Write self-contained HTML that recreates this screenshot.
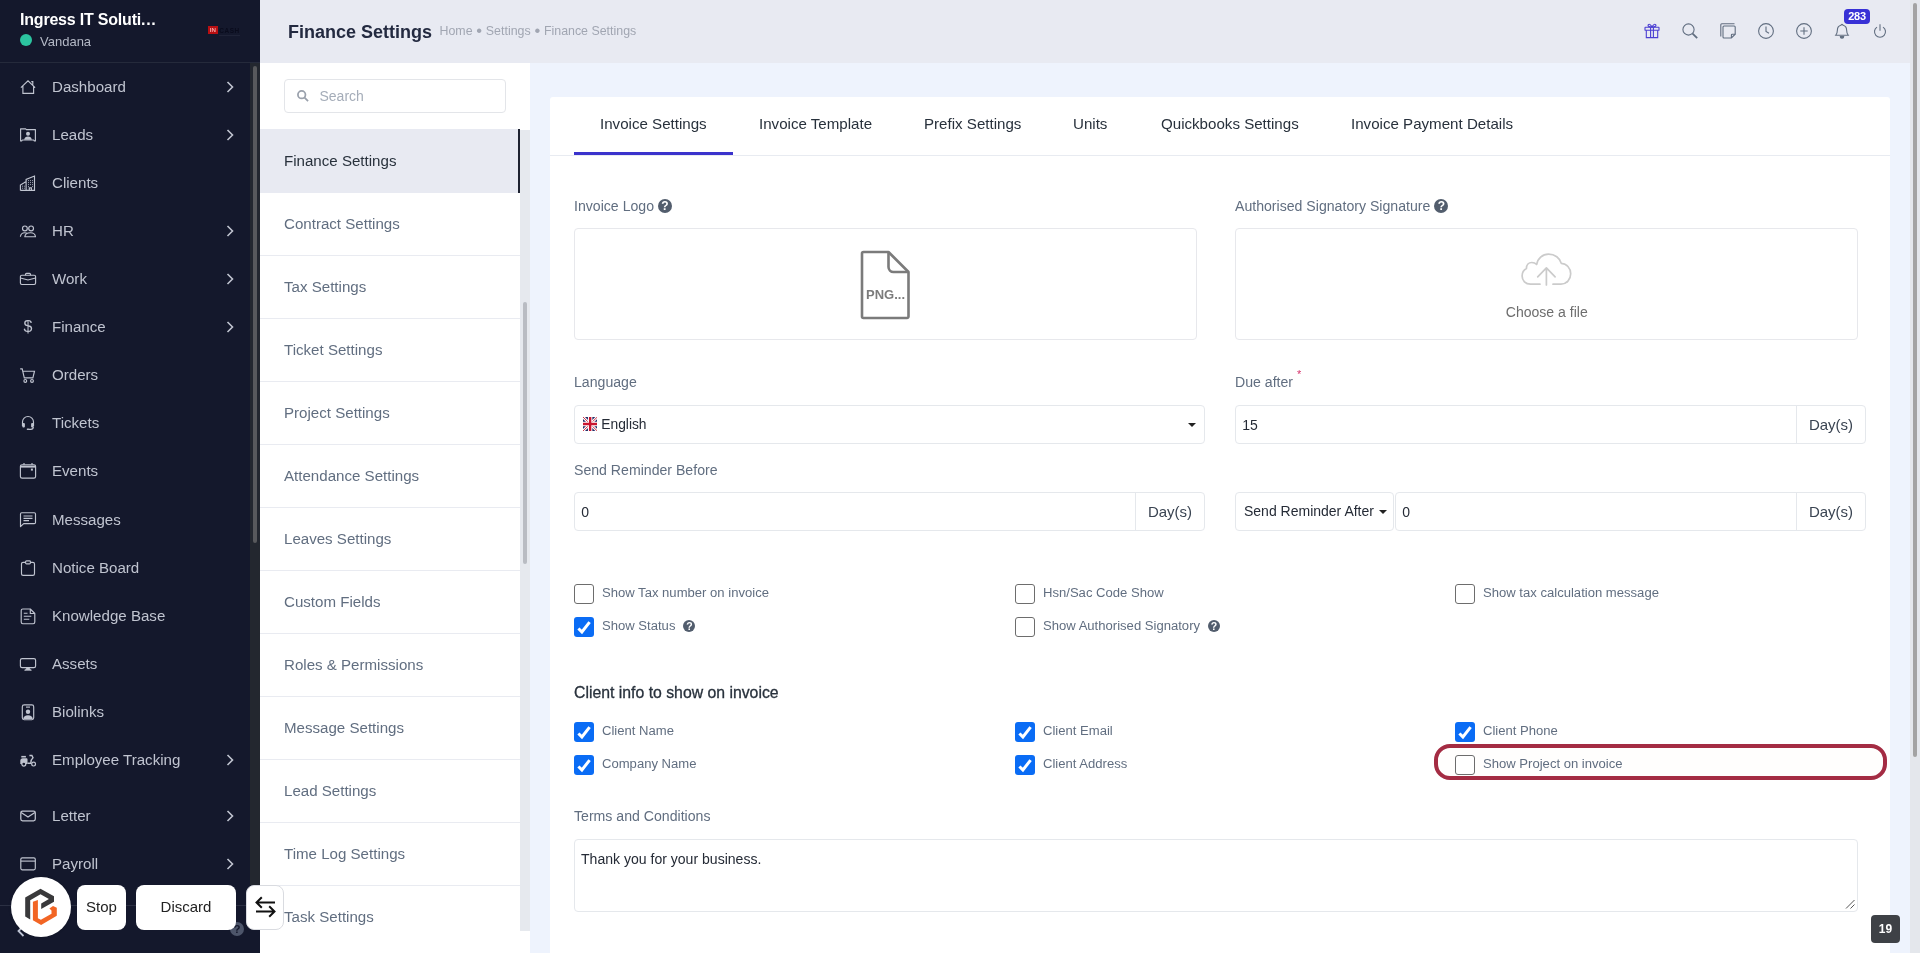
<!DOCTYPE html>
<html lang="en">
<head>
<meta charset="utf-8">
<title>Finance Settings</title>
<style>
*{box-sizing:border-box;margin:0;padding:0}
html,body{width:1920px;height:953px;overflow:hidden}
body>*{will-change:transform}
body{font-family:"Liberation Sans",Arial,sans-serif;background:#eef3fd;color:#28313c;position:relative}
.abs{position:absolute}
/* ---------- left sidebar ---------- */
#sb{position:absolute;left:0;top:0;width:260px;height:953px;background:#14182c;overflow:hidden}
#sb .brand{position:absolute;left:0;top:0;width:260px;height:63px;border-bottom:1px solid #252a3b}
#sb .brand .t{position:absolute;left:20px;top:11px;font-size:16px;letter-spacing:-0.2px;font-weight:700;color:#fff;white-space:nowrap}
#sb .brand .dot{position:absolute;left:20px;top:34px;width:12px;height:12px;border-radius:50%;background:#2cc4a0}
#sb .brand .u{position:absolute;left:40px;top:34px;font-size:13px;color:#b4b9c6;white-space:nowrap;line-height:15px}
#sb .mi{position:absolute;left:0;width:250px;height:24px;color:#c0c4d0;font-size:15.1px;line-height:24px}
#sb .mi span{position:absolute;left:52px;top:0;white-space:nowrap}
#sb .mi svg.ic{position:absolute;left:20px;top:4px;width:16px;height:16px;overflow:visible;fill:none;stroke:#c0c4d0;stroke-width:1.15}
#sb .mi svg.ch{position:absolute;left:225px;top:6px;width:10px;height:12px;fill:none;stroke:#c0c4d0;stroke-width:1.6}
#sb .track{position:absolute;left:250px;top:63px;width:10px;height:822px;background:#23272f}
#sb .thumb{position:absolute;left:253px;top:66px;width:4px;height:477px;border-radius:2px;background:#58595c}
/* ---------- top header ---------- */
#hd{position:absolute;left:260px;top:0;width:1650px;height:63px;background:#e8eaf2}
#hd h1{position:absolute;left:28px;top:22px;font-size:18px;font-weight:700;color:#232a40;line-height:21px;white-space:nowrap}
#hd .bc{position:absolute;left:179.5px;top:24px;font-size:12.4px;word-spacing:1px;color:#a1a6b2;line-height:15px;white-space:nowrap}
/* ---------- settings sidebar ---------- */
#ss{position:absolute;left:260px;top:63px;width:270px;height:890px;background:#fff;overflow:hidden}
#ss .search{position:absolute;left:24px;top:16px;width:222px;height:34px;border:1px solid #e3e5e9;border-radius:4px;background:#fff}
#ss .search span{position:absolute;left:34.5px;top:8px;font-size:14px;color:#a5adb9;line-height:16px}
#ss .it{position:absolute;left:0;width:260px;height:63px;border-bottom:1px solid #e9ebf1;font-size:15.1px;color:#616e80;line-height:62px;padding-left:24px;white-space:nowrap}
#ss .it.act{background:#e8eaf2;color:#28313c;border-right:2px solid #1d2230;border-bottom:none}
#ss .trk{position:absolute;left:260px;top:67px;width:10px;height:801px;background:#e6e9ee}
#ss .thb{position:absolute;left:262.5px;top:239px;width:4px;height:262px;border-radius:2px;background:#b9bcc2}

#sb .brand .lg{position:absolute;left:208px;top:25.5px;width:32px;height:11px;white-space:nowrap;font-weight:700}
#sb .brand .lg b{position:absolute;left:0;top:0;width:9.5px;height:8.7px;background:#b80f12;color:#f3a0a0;font-size:6.2px;line-height:8.7px;text-align:center;letter-spacing:0}
#sb .brand .lg i{position:absolute;left:11.3px;top:1.2px;font-style:normal;color:#090b1c;font-size:6.4px;line-height:7px;letter-spacing:.55px}
#sb .brand .lg u{position:absolute;left:11px;top:9.3px;width:21px;height:1px;background:#1f2337}
#sb .mi em.dl{position:absolute;left:22px;top:0;font-style:normal;font-size:16px;color:#c0c4d0;width:12px;text-align:center}
#sb .foot{position:absolute;left:0;top:905px;width:250px;height:1px;background:#2b3043}
#sb svg.fch{position:absolute;left:16px;top:925px;width:10px;height:12px;fill:none;stroke:#c0c6d6;stroke-width:1.8}
#sb .fq{position:absolute;left:230px;top:922px;width:14px;height:14px;border-radius:50%;background:#4d556a;color:#14182c;font-size:11px;font-weight:700;line-height:14px;text-align:center}
#ss .search svg{position:absolute;left:11.2px;top:9px;width:14px;height:14px;fill:none;stroke:#9aa1ac;stroke-width:2}
/* header icons */
#hd svg.hi{position:absolute;top:23px;width:16px;height:16px;fill:none;stroke:#616e80;stroke-width:1.1}
#hd .bdg{position:absolute;left:1584px;top:9px;width:26px;height:15px;border-radius:4px;background:#3831d6;color:#fff;font-size:11px;font-weight:700;line-height:15px;text-align:center;letter-spacing:-0.3px}
#ptrack{position:absolute;left:1910px;top:0;width:10px;height:953px;background:#e4e7ec}
#pthumb{position:absolute;left:1913px;top:3px;width:4px;height:754px;border-radius:2px;background:#a3a3a3}

#card .tabs{position:absolute;left:0;top:0;width:1340px;height:59px;border-bottom:1px solid #e8ebf1}
#card .tab{position:absolute;top:17px;font-size:15.12px;line-height:20px;color:#28313c;white-space:nowrap}
#card .tabul{position:absolute;left:24px;top:55px;width:159px;height:3px;background:#3b33cc}
.lbl{position:absolute;font-size:14.12px;line-height:16px;color:#616e80;white-space:nowrap}
.q{display:inline-block;vertical-align:1px;margin-left:4px;width:14px;height:14px;border-radius:50%;background:#525d6d;color:#fff;font-size:12px;font-weight:700;line-height:14px;text-align:center}
.q.s{width:12px;height:12px;font-size:10.5px;line-height:12px;vertical-align:0;margin-left:8px}
.box{position:absolute;border:1px solid #e7e8ec;border-radius:4px;background:#fff}
.inp{position:absolute;height:39px;border:1px solid #e5e8ec;border-radius:4px;background:#fff;font-size:14px;line-height:37px;color:#252b36;white-space:nowrap}
.addon{position:absolute;top:0;right:0;height:37px;width:69px;border-left:1px solid #e5e8ec;font-size:15px;line-height:38px;text-align:center;color:#3a4452}
.cb{position:absolute;width:20px;height:20px;border:1px solid #6d6d6d;border-radius:3px;background:#fff}
.cb.on{border:none;background:#0a6cf5}
.cb.on svg{position:absolute;left:0;top:0;width:20px;height:20px;fill:none;stroke:#fff;stroke-width:3}
.cl{position:absolute;font-size:13.09px;line-height:15px;color:#616e80;white-space:nowrap}
.caret{position:absolute;width:0;height:0;border-left:4px solid transparent;border-right:4px solid transparent;border-top:4px solid #222}
/* bottom overlay */
.ov{position:absolute;background:#fff;color:#222;font-size:15px;text-align:center}
/* ---------- main card ---------- */
#card{position:absolute;left:550px;top:97px;width:1340px;height:856px;background:#fff;border-radius:3px 3px 0 0}
</style>
</head>
<body>
<div id="sb">
<div class="brand"><div class="t">Ingress IT Soluti<span style="letter-spacing:.7px">...</span></div><div class="dot"></div><div class="u">Vandana</div><div class="lg"><b>IN</b><i>CASH</i><u></u></div></div>
<div class="mi" style="top:75px"><svg class="ic" viewBox="0 0 16 16"><path d="M.9 8.700 8 1.900l7.100 6.800M2.900 7v7.400h10.700V7M11.300 2.600h1.500v3.200"/></svg><span>Dashboard</span><svg class="ch" viewBox="0 0 10 12"><path d="M2.500 1l5 5-5 5"/></svg></div>
<div class="mi" style="top:123px"><svg class="ic" viewBox="0 0 16 16"><path d="M.6 1.800h5l.8.800h9v11.300h-1.100l-.7-.9H2.400l-.7.900H.6z" stroke-linejoin="round"/><circle cx="8" cy="6.700" r="2" fill="#c0c4d0" stroke="none"/><path d="M4.200 12.700c.3-2.100 1.700-3.100 3.800-3.100s3.500 1 3.800 3.100z" fill="#c0c4d0" stroke="none"/></svg><span>Leads</span><svg class="ch" viewBox="0 0 10 12"><path d="M2.500 1l5 5-5 5"/></svg></div>
<div class="mi" style="top:171px"><svg class="ic" viewBox="0 0 16 16"><path d="M.4 15.400V10l3.300-1.900 2.400-1.500v8.800M6.100 15.400V4.400L14.500 1v14.400zM9.300 15.400v-2.600h2.100v2.600M.4 15.400h14.100"/><path d="M8 5.600h.9M10 5.600h.9M12 5.600h.9M8 7.600h.9M10 7.600h.9M12 7.600h.9M8 9.600h.9M10 9.600h.9M12 9.600h.9M8 11.600h.9M12 11.600h.9M2 11.200h.9M3.900 11.200h.9M2 13.200h.9M3.900 13.200h.9" stroke-width="0.900"/></svg><span>Clients</span></div>
<div class="mi" style="top:219px"><svg class="ic" viewBox="0 0 16 16"><circle cx="4.900" cy="5.400" r="2.400"/><circle cx="11.100" cy="5.400" r="2.400"/><path d="M.4 13.700c.3-2.700 1.800-4 4.400-4 .9 0 1.600.2 2.200.5M4.800 13.700c.3-2.700 2.400-4 5.700-4 3 0 4.700 1.300 5 4z" stroke-linejoin="round"/></svg><span>HR</span><svg class="ch" viewBox="0 0 10 12"><path d="M2.500 1l5 5-5 5"/></svg></div>
<div class="mi" style="top:267px"><svg class="ic" viewBox="0 0 16 16"><rect x=".4" y="4.200" width="15.200" height="9.300" rx="1.400"/><path d="M5.500 4.200V3.400c0-.6.400-1 1-1h3c.6 0 1 .4 1 1v.8M.4 7l7.600 2 7.600-2"/></svg><span>Work</span><svg class="ch" viewBox="0 0 10 12"><path d="M2.500 1l5 5-5 5"/></svg></div>
<div class="mi" style="top:315px"><em class="dl">$</em><span>Finance</span><svg class="ch" viewBox="0 0 10 12"><path d="M2.500 1l5 5-5 5"/></svg></div>
<div class="mi" style="top:363px"><svg class="ic" viewBox="0 0 16 16"><path d="M.2 1.900h2l2.100 8.900h8.600l1.600-6.600H3.100"/><circle cx="5.300" cy="13.900" r="1.400"/><circle cx="12" cy="13.900" r="1.400"/></svg><span>Orders</span></div>
<div class="mi" style="top:411px"><svg class="ic" viewBox="0 0 16 16"><path d="M2.500 11V7a5.500 5.500 0 0 1 11 0v4"/><rect x="2.300" y="8" width="2.600" height="4.500" rx="1.100" fill="#c0c4d0" stroke="none"/><rect x="11.100" y="8" width="2.600" height="4.500" rx="1.100" fill="#c0c4d0" stroke="none"/><path d="M13.300 12c0 1.600-1 2.300-2.600 2.300H9"/><rect x="6.700" y="13.400" width="2.600" height="1.700" rx=".8" fill="#c0c4d0" stroke="none"/></svg><span>Tickets</span></div>
<div class="mi" style="top:459px"><svg class="ic" viewBox="0 0 16 16"><rect x=".4" y="1.700" width="15.200" height="13.400" rx="1.700"/><path d="M.4 3.600h15.200" stroke-width="2"/><path d="M4 0v1.700M12 0v1.700"/><rect x="10.900" y="5.600" width="2" height="2" fill="#c0c4d0" stroke="none"/></svg><span>Events</span></div>
<div class="mi" style="top:508px"><svg class="ic" viewBox="0 0 16 16"><path d="M.5 1.900c0-.7.500-1.200 1.200-1.200h12.600c.7 0 1.200.5 1.200 1.200v8.500c0 .7-.5 1.200-1.200 1.200H3.700L.5 14.600z" stroke-linejoin="round"/><path d="M3.500 4h9M3.500 6.300h9M3.500 8.600h5.500" stroke-width="1.200"/></svg><span>Messages</span></div>
<div class="mi" style="top:556px"><svg class="ic" viewBox="0 0 16 16"><path d="M5.600 2.300H3.100c-.9 0-1.600.7-1.600 1.600v9.900c0 .9.700 1.600 1.600 1.600h9.800c.9 0 1.600-.7 1.600-1.600V3.900c0-.9-.7-1.600-1.600-1.600h-2.500"/><rect x="5.600" y=".8" width="4.800" height="3" rx=".9"/></svg><span>Notice Board</span></div>
<div class="mi" style="top:604px"><svg class="ic" viewBox="0 0 16 16"><path d="M10.300 1H2.800c-.9 0-1.600.7-1.600 1.600v11.500c0 .9.700 1.600 1.600 1.600h10.400c.9 0 1.600-.7 1.600-1.600V5.500z" stroke-linejoin="round"/><path d="M10.300 1v4.500h4.500M3.800 5.200h3.700M3.800 8.200h7.500M3.800 11.200h5.500"/></svg><span>Knowledge Base</span></div>
<div class="mi" style="top:652px"><svg class="ic" viewBox="0 0 16 16"><rect x=".4" y="2.600" width="15.200" height="9" rx="1.700"/><path d="M4.600 14.200c1.300-.3 1.900-1 1.900-2.600h3c0 1.600.6 2.300 1.900 2.600z" fill="#c0c4d0" stroke-linejoin="round" stroke-width=".8"/></svg><span>Assets</span></div>
<div class="mi" style="top:700px"><svg class="ic" viewBox="0 0 16 16"><rect x="2.300" y=".9" width="11.400" height="14.800" rx="1.900"/><path d="M6 3.100h4"/><circle cx="8" cy="7.800" r="2.200" fill="#c0c4d0" stroke="none"/><path d="M3.200 15c.3-2.600 2-3.800 4.800-3.800s4.500 1.200 4.800 3.800z" fill="#c0c4d0" stroke="none"/></svg><span>Biolinks</span></div>
<div class="mi" style="top:748px"><svg class="ic" viewBox="0 0 16 16"><path d="M.3 12V8.800c0-1.400 1-2.500 2.400-2.500h3.700c.6 0 1.100.5 1.100 1.100V12z" fill="#c0c4d0" stroke="none"/><path d="M1.300 4.700h4.600" stroke-width="1.600"/><circle cx="3.800" cy="12.100" r="2" fill="#14182c" stroke-width="1.200"/><circle cx="13.600" cy="12.100" r="1.900" stroke-width="1.200"/><path d="M7.500 11.300h3.300c0-2.700.6-4.300 2.200-5.500L11.900 3.500H9.400" stroke-width="1.400"/></svg><span>Employee Tracking</span><svg class="ch" viewBox="0 0 10 12"><path d="M2.500 1l5 5-5 5"/></svg></div>
<div class="mi" style="top:804px"><svg class="ic" viewBox="0 0 16 16"><rect x=".8" y="3.100" width="14.500" height="9.700" rx="1.700" stroke-width="1.250"/><path d="M1.100 4.400 8 9l6.900-4.600" stroke-width="1.250"/></svg><span>Letter</span><svg class="ch" viewBox="0 0 10 12"><path d="M2.500 1l5 5-5 5"/></svg></div>
<div class="mi" style="top:852px"><svg class="ic" viewBox="0 0 16 16"><rect x=".8" y="1.800" width="14.500" height="12" rx="1.500"/><path d="M.8 5.100h14.500"/></svg><span>Payroll</span><svg class="ch" viewBox="0 0 10 12"><path d="M2.500 1l5 5-5 5"/></svg></div>
<div class="track"></div><div class="thumb"></div>
<div class="foot"></div><svg class="fch" viewBox="0 0 10 12"><path d="M7.500 1l-5 5 5 5"/></svg><div class="fq">?</div>
</div>
<div id="hd"><h1>Finance Settings</h1><div class="bc">Home <i style="font-style:normal;font-size:16.5px;line-height:0;margin:0 -0.7px;position:relative;top:1px">•</i> Settings <i style="font-style:normal;font-size:16.5px;line-height:0;margin:0 -0.7px;position:relative;top:1px">•</i> <span style="word-spacing:0">Finance Settings</span></div>
<svg class="hi" style="left:1384px;stroke:#4b3fd2" viewBox="0 0 16 16"><rect x="1" y="4.300" width="14" height="3" rx=".4"/><path d="M2.300 7.300v7.300h11.400V7.300M6.600 4.300v10.300M9.400 4.300v10.300"/><path d="M8 4.200C6.800 1.500 5.300.8 4.400 1.600c-.9.900 0 2.600 3.600 2.600zM8 4.200c1.200-2.700 2.700-3.400 3.600-2.600.9.900 0 2.600-3.600 2.600z"/></svg>
<svg class="hi" style="left:1422px" viewBox="0 0 16 16"><circle cx="6.500" cy="6.500" r="5.600"/><path d="M10.600 10.600l4.600 4.600" stroke-width="1.800"/></svg>
<svg class="hi" style="left:1460px" viewBox="0 0 16 16"><path d="M.8 13.500V1.800c0-.6.400-1 1-1h12.700"/><path d="M3 4c0-.6.400-1 1-1h10.200c.6 0 1 .4 1 1v7.200L11.400 15H4c-.6 0-1-.4-1-1z"/><path d="M15.200 11.200h-3c-.5 0-.8.300-.8.800V15"/></svg>
<svg class="hi" style="left:1498px" viewBox="0 0 16 16"><circle cx="8" cy="8" r="7.400"/><path d="M8 3.500V8.500l3 1.700"/></svg>
<svg class="hi" style="left:1536px" viewBox="0 0 16 16"><circle cx="8" cy="8" r="7.400"/><path d="M8 4.300v7.400M4.300 8h7.400"/></svg>
<svg class="hi" style="left:1574px" viewBox="0 0 16 16"><path d="M8 1.200c.6 0 1 .4 1 1 2.300.5 3.600 2.400 3.600 4.800 0 2.800.7 4 1.700 5.300H1.700C2.700 11 3.400 9.800 3.400 7c0-2.400 1.300-4.300 3.600-4.800 0-.6.400-1 1-1z"/><path d="M6.300 13.500a1.700 1.700 0 0 0 3.400 0z" fill="#616e80"/></svg>
<svg class="hi" style="left:1612px" viewBox="0 0 16 16"><path d="M8 1.300v6.500"/><path d="M5 4.100a5.500 5.500 0 1 0 6 0"/></svg>
<div class="bdg">283</div>
</div>
<div id="ss">
<div class="search"><svg viewBox="0 0 16 16"><circle cx="6.500" cy="6.500" r="4.300"/><path d="M9.800 9.800l4 4"/></svg><span>Search</span></div>
<div class="it act" style="top:66px;height:63.500px;line-height:63px">Finance Settings</div>
<div class="it" style="top:129.5px">Contract Settings</div>
<div class="it" style="top:192.5px">Tax Settings</div>
<div class="it" style="top:255.5px">Ticket Settings</div>
<div class="it" style="top:318.5px">Project Settings</div>
<div class="it" style="top:381.5px">Attendance Settings</div>
<div class="it" style="top:444.5px">Leaves Settings</div>
<div class="it" style="top:507.5px">Custom Fields</div>
<div class="it" style="top:570.5px">Roles &amp; Permissions</div>
<div class="it" style="top:633.5px">Message Settings</div>
<div class="it" style="top:696.5px">Lead Settings</div>
<div class="it" style="top:759.5px">Time Log Settings</div>
<div class="it" style="top:822.5px;border-bottom:none">Task Settings</div>
<div class="trk"></div><div class="thb"></div>
</div>
<div id="card">
<div class="tabs"><div class="tabul"></div>
<div class="tab" style="left:50px">Invoice Settings</div>
<div class="tab" style="left:209px">Invoice Template</div>
<div class="tab" style="left:374px">Prefix Settings</div>
<div class="tab" style="left:523px">Units</div>
<div class="tab" style="left:611px">Quickbooks Settings</div>
<div class="tab" style="left:801px">Invoice Payment Details</div>
</div>
<div class="lbl" style="left:24px;top:101px">Invoice Logo<span class="q">?</span></div>
<div class="lbl" style="left:685px;top:101px">Authorised Signatory Signature<span class="q">?</span></div>
<div class="box" style="left:24px;top:131px;width:623px;height:112px"><svg style="position:absolute;left:285px;top:20.500px;width:51px;height:70px" viewBox="0 0 51 70"><path d="M3.500 2h25l20 20v44.500a1.500 1.500 0 0 1-1.500 1.500h-43.500a1.500 1.500 0 0 1-1.500-1.500v-63a1.500 1.500 0 0 1 1.500-1.500z" fill="#fff" stroke="#7b7b7b" stroke-width="2.600" stroke-linejoin="round"/><path d="M28.500 2v15a5 5 0 0 0 5 5h15" fill="none" stroke="#7b7b7b" stroke-width="2.600" stroke-linejoin="round"/><text x="25.500" y="49" text-anchor="middle" font-family="Liberation Sans, Arial, sans-serif" font-size="13" font-weight="700" fill="#7b7b7b">PNG...</text></svg></div>
<div class="box" style="left:685px;top:131px;width:623px;height:112px"><svg style="position:absolute;left:284px;top:24px;width:52px;height:34px;overflow:visible;fill:none;stroke:#cbcbcb;stroke-width:1.700;stroke-linecap:round;stroke-linejoin:round" viewBox="0 0 52 34"><path d="M20 31.200H10.500C5.500 31.200 2.100 27.500 2.100 23c0-3.500 1.700-6.300 4.300-7.600C6.500 12 8.700 9.500 11.800 9.500c1.900 0 3.600.7 4.900 2C17.500 5.500 22.500 1.100 28.500 1.100c6.300 0 11.500 4 12.800 9.300 5.200.2 9.400 4.700 9.400 10.400 0 5.700-4.200 10.400-9.700 10.400H33"/><path d="M26.400 32V15M17.700 23.800l8.700-9 8.700 9"/></svg><div style="position:absolute;left:0;top:74.500px;width:621.500px;text-align:center;font-size:14.060px;line-height:16px;color:#6e6e6e">Choose a file</div></div>
<div class="lbl" style="left:24px;top:277px">Language</div>
<div class="lbl" style="left:685px;top:277px">Due after<sup style="color:#d6336c;font-size:11px;line-height:0;position:relative;top:-3px;left:4px">*</sup></div>
<div class="inp" style="left:24px;top:308px;width:631px"><svg style="position:absolute;left:8px;top:11px;width:14.300px;height:14px" preserveAspectRatio="none" viewBox="0 0 15 14"><rect width="15" height="14" fill="#232c66"/><path d="M0 0l15 14M15 0L0 14" stroke="#fff" stroke-width="2.800"/><path d="M0 0l15 14M15 0L0 14" stroke="#cf3045" stroke-width="1"/><path d="M7.500 0v14M0 7h15" stroke="#fff" stroke-width="4.600"/><path d="M7.500 0v14M0 7h15" stroke="#c9142f" stroke-width="2.500"/></svg><span style="position:absolute;left:26.300px;top:0;font-size:13.800px">English</span><div class="caret" style="left:613px;top:17px"></div></div>
<div class="inp" style="left:685px;top:308px;width:631px"><span style="position:absolute;left:6.300px;top:0.500px">15</span><div class="addon">Day(s)</div></div>
<div class="lbl" style="left:24px;top:365px">Send Reminder Before</div>
<div class="inp" style="left:24px;top:395px;width:631px"><span style="position:absolute;left:6.300px;top:0.500px">0</span><div class="addon">Day(s)</div></div>
<div class="inp" style="left:685px;top:395px;width:159px"><span style="position:absolute;left:8px;top:0">Send Reminder After</span><div class="caret" style="left:142.500px;top:17px"></div></div>
<div class="inp" style="left:845px;top:395px;width:471px"><span style="position:absolute;left:6.300px;top:0.500px">0</span><div class="addon">Day(s)</div></div>
<div class="cb" style="left:24px;top:487px"></div><div class="cl" style="left:52px;top:488px">Show Tax number on invoice</div>
<div class="cb" style="left:465px;top:487px"></div><div class="cl" style="left:493px;top:488px">Hsn/Sac Code Show</div>
<div class="cb" style="left:905px;top:487px"></div><div class="cl" style="left:933px;top:488px">Show tax calculation message</div>
<div class="cb on" style="left:24px;top:520px"><svg viewBox="0 0 20 20"><path d="M4.400 11.500l3.500 3.400 7.700-9.800"/></svg></div><div class="cl" style="left:52px;top:521px">Show Status<span class="q s">?</span></div>
<div class="cb" style="left:465px;top:520px"></div><div class="cl" style="left:493px;top:521px">Show Authorised Signatory<span class="q s">?</span></div>
<div style="position:absolute;left:24px;top:587px;font-size:15.800px;line-height:18px;color:#28313c;-webkit-text-stroke:0.300px #28313c;white-space:nowrap">Client info to show on invoice</div>
<div class="cb on" style="left:24px;top:625px"><svg viewBox="0 0 20 20"><path d="M4.400 11.500l3.500 3.400 7.700-9.800"/></svg></div><div class="cl" style="left:52px;top:626px">Client Name</div>
<div class="cb on" style="left:465px;top:625px"><svg viewBox="0 0 20 20"><path d="M4.400 11.500l3.500 3.400 7.700-9.800"/></svg></div><div class="cl" style="left:493px;top:626px">Client Email</div>
<div class="cb on" style="left:905px;top:625px"><svg viewBox="0 0 20 20"><path d="M4.400 11.500l3.500 3.400 7.700-9.800"/></svg></div><div class="cl" style="left:933px;top:626px">Client Phone</div>
<div class="cb on" style="left:24px;top:658px"><svg viewBox="0 0 20 20"><path d="M4.400 11.500l3.500 3.400 7.700-9.800"/></svg></div><div class="cl" style="left:52px;top:659px">Company Name</div>
<div class="cb on" style="left:465px;top:658px"><svg viewBox="0 0 20 20"><path d="M4.400 11.500l3.500 3.400 7.700-9.800"/></svg></div><div class="cl" style="left:493px;top:659px">Client Address</div>
<div style="position:absolute;left:884px;top:647px;width:453px;height:36px;border:4px solid #a42c43;border-radius:16px;background:#fffefd"></div>
<div class="cb" style="left:905px;top:658px"></div><div class="cl" style="left:933px;top:659px">Show Project on invoice</div>
<div class="lbl" style="left:24px;top:711px">Terms and Conditions</div>
<div class="box" style="left:24px;top:742px;width:1284px;height:73px;border-color:#e5e8ec"><div style="position:absolute;left:6px;top:10.600px;font-size:14.050px;line-height:16px;color:#252b36">Thank you for your business.</div><svg style="position:absolute;right:2px;bottom:2px;width:10px;height:10px" viewBox="0 0 10 10"><path d="M9.500 1L1 9.500M9.500 5.500L5.500 9.500" stroke="#555" stroke-width="1"/></svg></div>
</div>
<div id="ptrack"></div><div id="pthumb"></div>

<div style="position:absolute;left:1871px;top:915px;width:29px;height:28px;border-radius:4px;background:#3e4146;color:#fff;font-size:12px;font-weight:700;line-height:28px;text-align:center">19</div>
<div class="ov" style="left:11px;top:877px;width:60px;height:60px;border-radius:50%;box-shadow:0 0 3px rgba(0,0,0,.2)"><svg style="position:absolute;left:0;top:0;width:60px;height:60px" viewBox="0 0 60 60"><path d="M14.200 20.500L29.500 11.700 43 19.300v5.400L30.200 32v-5.600l7.700-4.300-8.400-4.800-10.300 6v19.100l-5-3z" fill="#39393b"/><path d="M21.900 24.800l5-1.800v18.300l3 1.500 10.600-6v-3.200l-2.100-2 3.600-2.600 3.800 1.800v7.900L30.100 47.900l-8.200-4.600z" fill="#f26524"/></svg></div>
<div class="ov" style="left:77px;top:885px;width:49px;height:45px;border-radius:8px;line-height:44px">Stop</div>
<div class="ov" style="left:136px;top:885px;width:100px;height:45px;border-radius:8px;line-height:44px">Discard</div>
<div class="ov" style="left:246px;top:885px;width:38px;height:45px;border-radius:8px;border:1px solid #d9dbe0"><svg style="position:absolute;left:8px;top:10px;width:21px;height:23px;fill:none;stroke:#111;stroke-width:2" viewBox="0 0 21 23"><path d="M20 6.500H1.500M6.800 1.200L1.500 6.500l5.300 5.300M1 15.500h18.500M14.200 10.200l5.300 5.300-5.300 5.300"/></svg></div>

</body>
</html>
